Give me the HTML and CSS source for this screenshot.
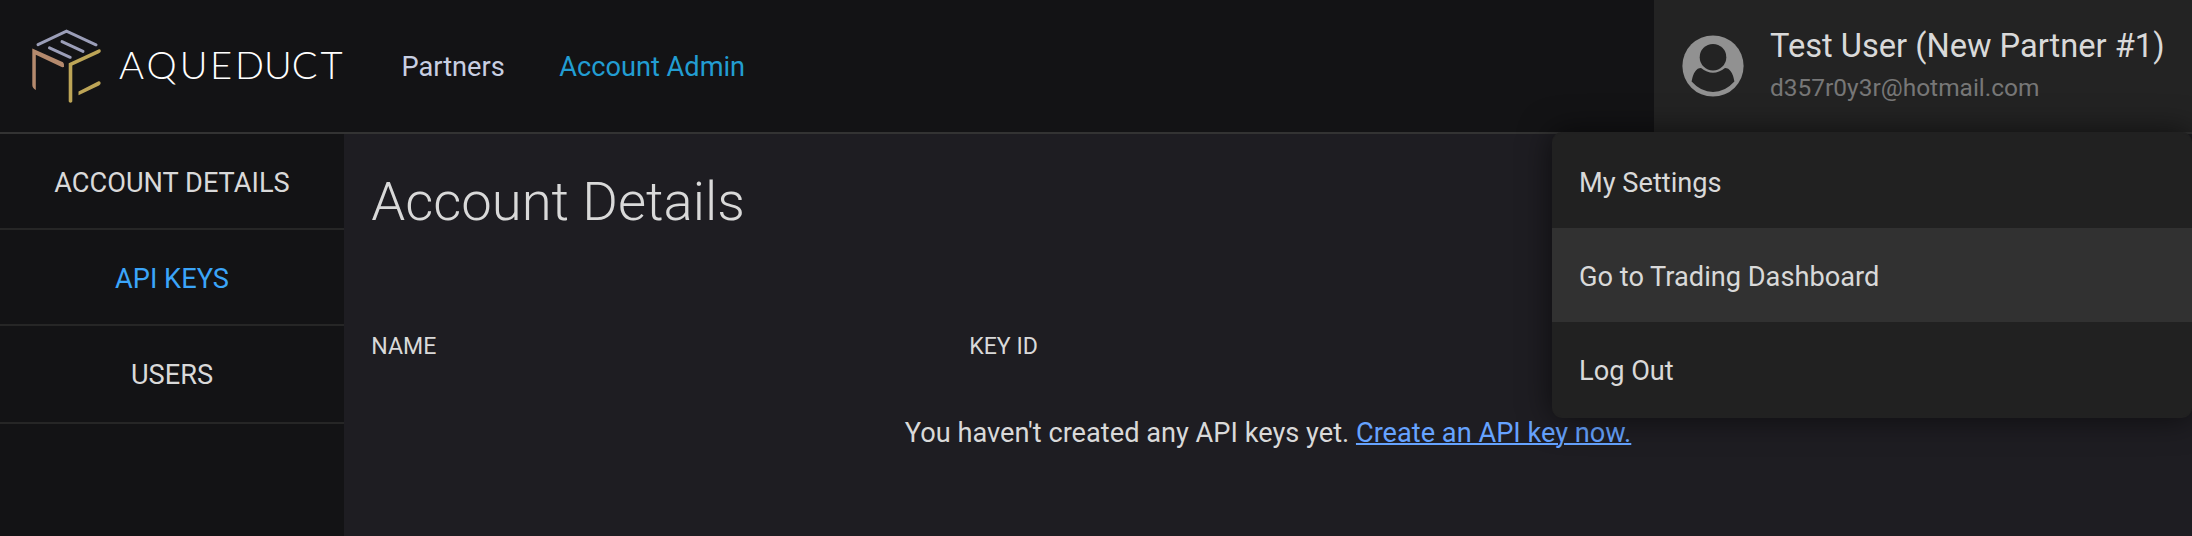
FILE: index.html
```html
<!DOCTYPE html>
<html lang="en">
<head>
<meta charset="utf-8">
<title>Aqueduct</title>
<link rel="stylesheet" href="styles.css">
</head>
<body>
<header class="header">
  <a class="brand" aria-label="Aqueduct">
    <svg class="brand-logo" width="316" height="80" viewBox="30 26 316 80">
      <g fill="none" stroke="#9b9eb8" stroke-width="3" stroke-linecap="round">
        <path d="M38 44.6 66.5 31.2 96 44.8M49.5 47.8 70.2 57.3M62 41.6 83 51.4"/>
      </g>
      <path fill="#b58a6d" d="M32.3 48.4 63 62.2Q64.4 63.2 64 67L62.2 67.2 35.8 54.8V90Q32.3 88 32.3 85z"/>
      <path fill="#bda557" d="M99 49.2Q101.2 48.8 100.6 52L99 53.2 72.3 65.6V101.4Q70.5 104 68.7 101.4V63.2zM78.5 91.6 98.5 81.2Q101 80.8 100.5 84L99 85.6 78.5 95.2z"/>
      <text class="brand-text" y="79.3" x="119 146.5 179.8 210 235 264 291.7 320.5">AQUEDUCT</text>
    </svg>
  </a>
  <nav class="nav">
    <a class="nav-link">Partners</a>
    <a class="nav-link nav-link-active">Account Admin</a>
  </nav>
  <div class="user">
    <svg class="avatar" width="62" height="62" viewBox="0 0 62 62">
      <circle cx="31" cy="31" r="30.6" fill="#919191"/>
      <ellipse cx="31" cy="22.2" rx="13.3" ry="13.2" fill="#232323"/>
      <path fill="#232323" d="M19 33Q31 42.5 43 33Q50 33 52.4 46.5Q43 57 31 57T9.6 46.5Q12 33 19 33z"/>
    </svg>
    <div class="user-info">
      <div class="user-name">Test User (New Partner #1)</div>
      <div class="user-email">d357r0y3r@hotmail.com</div>
    </div>
    <div class="menu">
      <a class="menu-item">My Settings</a>
      <a class="menu-item menu-item-hover">Go to Trading Dashboard</a>
      <a class="menu-item">Log Out</a>
    </div>
  </div>
</header>
<div class="page">
  <aside class="sidebar">
    <a class="side-link">Account Details</a>
    <a class="side-link side-link-active">API Keys</a>
    <a class="side-link">Users</a>
  </aside>
  <main class="content">
    <h1 class="title">Account Details</h1>
    <div class="table-head"><span>NAME</span><span>KEY ID</span></div>
    <p class="empty">You haven't created any API keys yet. <a class="link">Create an API key now.</a></p>
  </main>
</div>
</body>
</html>
```
FILE: styles.css
```css
* { box-sizing: border-box; }
body {
  margin: 0;
  height: 536px;
  overflow: hidden;
  background: #1e1d22;
  color: #d9d9d9;
  font: 27.2px/36px Roboto, sans-serif;
}
.header {
  display: flex;
  height: 134px;
  background: #131315;
  border-bottom: 2px solid #333;
}
.brand { padding: 26px 0 0 30px; width: 401.5px; }
.brand-logo { display: block; }
.brand-text { font: 300 38.2px Lato, sans-serif; fill: #fff; }
.nav { display: flex; align-items: center; gap: 54.5px; flex: 1; padding-top: 2px; }
.nav-link { color: #c8cfe2; }
.nav-link-active { color: #229dd2; }
.user {
  position: relative;
  display: flex;
  gap: 26px;
  width: 538px;
  padding-left: 28px;
  align-items: center;
  background: #232323;
}
.user-name { font-size: 32.64px; line-height: 42px; white-space: nowrap; }
.user-email { font-size: 24.48px; line-height: 40px; padding-top: 1px; margin-bottom: -1px; color: #777; }
.menu {
  position: absolute;
  top: 132px;
  right: 0;
  width: 640px;
  border: 2px solid #212121;
  border-width: 2px 0;
  border-radius: 10px;
  background: #212121;
  box-shadow: 0 0 32px rgba(0, 0, 0, .6);
}
.menu-item { display: block; height: 94px; padding: 2px 27px 0; line-height: 94px; }
.menu-item-hover { background: #313131; }
.page { display: flex; height: 402px; }
.sidebar { width: 344px; background: #131315; }
.side-link {
  display: block;
  height: 96px;
  line-height: 98px;
  text-align: center;
  text-transform: uppercase;
  border-bottom: 2px solid #262626;
}
.side-link:last-child { height: 98px; }
.side-link-active { color: #3ba5f9; }
.content { flex: 1; padding: 35px 27.2px 0; }
.title { margin: 0; font-weight: 300; font-size: 54.4px; line-height: 66px; }
.table-head { display: grid; grid-template-columns: 598px 1fr; margin-top: 94px; font-size: 23.12px; }
.empty { margin: 50px 0 0; text-align: center; }
.link { color: #66a3ff; text-decoration: underline; text-decoration-thickness: 2px; }
```
